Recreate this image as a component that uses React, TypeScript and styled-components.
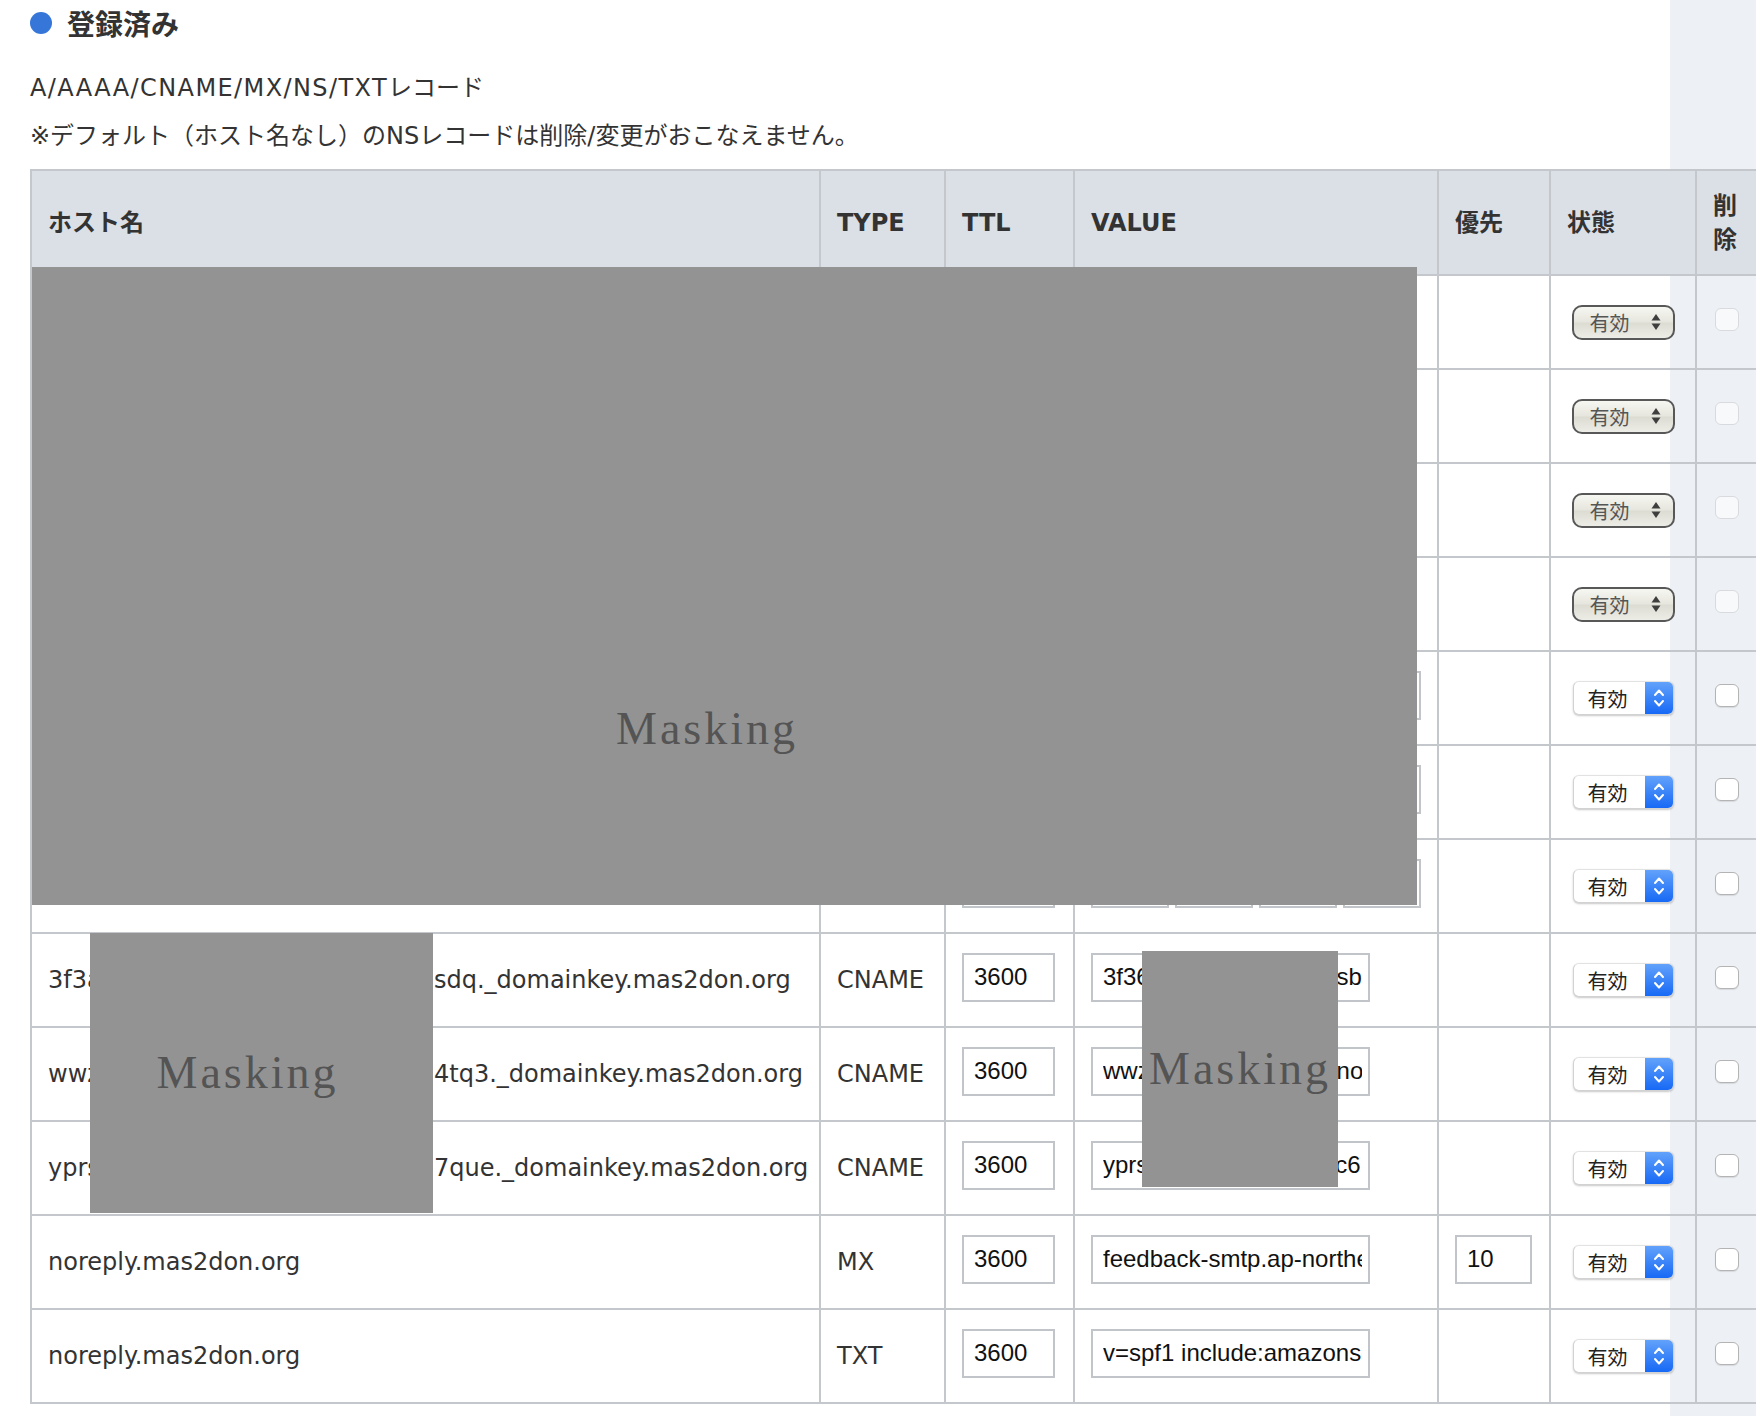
import React from 'react';
import styled, {createGlobalStyle} from 'styled-components';

const GlobalStyle = createGlobalStyle`
  html, body {
    margin: 0;
    padding: 0;
  }
  body {
    background: #edf0f4;
    color: #333;
    font-family: "DejaVu Sans", "Noto Sans CJK JP", sans-serif;
  }
`;

type DnsRecord = {
  host: string;
  hostMasked?: string;
  type: string;
  ttl: string;
  value?: string;
  octets?: string[];
  priority?: string;
  locked?: boolean;
};

const records: DnsRecord[] = [
  {host: 'mas2don.org', type: 'NS', ttl: '172800', value: 'ns-1088.awsdns-08.org.', locked: true},
  {host: 'mas2don.org', type: 'NS', ttl: '172800', value: 'ns-1783.awsdns-30.co.uk.', locked: true},
  {host: 'mas2don.org', type: 'NS', ttl: '172800', value: 'ns-325.awsdns-40.com.', locked: true},
  {host: 'mas2don.org', type: 'NS', ttl: '172800', value: 'ns-731.awsdns-27.net.', locked: true},
  {host: 'mas2don.org', type: 'A', ttl: '3600', octets: ['13', '230', '54', '112']},
  {host: 'www.mas2don.org', type: 'A', ttl: '3600', octets: ['13', '230', '54', '112']},
  {host: 'files.mas2don.org', type: 'A', ttl: '3600', octets: ['52', '68', '11', '207']},
  {
    hostMasked: '3f3a8e1d0b7e29d45kqw8',
    host: 'sdq._domainkey.mas2don.org',
    type: 'CNAME',
    ttl: '3600',
    value: '3f36a8e1d0b7e29d45sbq.dkim.amazonses.com',
  },
  {
    hostMasked: 'wwza4b8e1d2905e7dkl',
    host: '4tq3._domainkey.mas2don.org',
    type: 'CNAME',
    ttl: '3600',
    value: 'wwza4b8e1d2905e7dnoq.dkim.amazonses.com',
  },
  {
    hostMasked: 'yprs8e1d0a7b29d45xm',
    host: '7que._domainkey.mas2don.org',
    type: 'CNAME',
    ttl: '3600',
    value: 'yprs8e1d0a7b29d45dc6.dkim.amazonses.com',
  },
  {
    host: 'noreply.mas2don.org',
    type: 'MX',
    ttl: '3600',
    value: 'feedback-smtp.ap-northeast-1.amazonses.com',
    priority: '10',
  },
  {host: 'noreply.mas2don.org', type: 'TXT', ttl: '3600', value: 'v=spf1 include:amazonses.com ~all'},
];

const Page = styled.div`
  display: flex;
  min-height: 1416px;
  overflow: hidden;
`;

const Main = styled.main`
  position: relative;
  z-index: 1;
  flex: 0 0 1670px;
  min-width: 0;
  box-sizing: border-box;
  padding-left: 30px;
  background: #fff;
`;

const Side = styled.aside`
  flex: 1;
  min-width: 0;
  background: #edf0f4;
`;

const Heading = styled.h2`
  display: flex;
  align-items: center;
  gap: 15px;
  height: 46px;
  margin: 0;
  font-family: "Noto Sans CJK JP", sans-serif;
  font-size: 28px;
  font-weight: bold;
  color: #333;
`;

const Dot = styled.span`
  width: 22px;
  height: 22px;
  border-radius: 50%;
  background: #3576d8;
`;

const Notes = styled.div`
  margin-top: 18px;
  font-size: 24px;
  line-height: 48px;
  color: #333;
  white-space: nowrap;
`;

const Wide = styled.span`
  letter-spacing: 1.4px;
`;

const Table = styled.table`
  width: 1726px;
  margin-top: 9px;
  table-layout: fixed;
  border-collapse: collapse;
  font-size: 24px;
`;

const HeadCell = styled.th`
  height: 103px;
  padding: 0 16px;
  border: 2px solid #c4c7cb;
  background: #dbe0e7;
  text-align: left;
  vertical-align: middle;
  font-weight: bold;
  line-height: 34px;
  color: #333;
`;

const Cell = styled.td<{$center?: boolean}>`
  height: 92px;
  padding: 0 16px;
  border: 2px solid #c4c7cb;
  text-align: ${p => (p.$center ? 'center' : 'left')};
  vertical-align: middle;
  white-space: nowrap;
  overflow: hidden;
  color: #333;
`;

const HostPrefix = styled.span`
  display: inline-block;
  width: 386px;
  overflow: hidden;
  vertical-align: bottom;
`;

const Field = styled.input<{$w: number}>`
  display: block;
  box-sizing: border-box;
  width: ${p => p.$w}px;
  height: 49px;
  margin: 0 0 6px;
  padding: 0 6px 0 10px;
  border: 2px solid #c1c4c8;
  border-radius: 0;
  background: #fff;
  font-family: "Liberation Sans", Arial, sans-serif;
  font-size: 24px;
  color: #111;
  outline: none;
`;

const Octets = styled.div`
  display: flex;
  gap: 6px;
`;

const Select = styled.div<{$legacy?: boolean}>`
  display: inline-flex;
  align-items: center;
  justify-content: space-between;
  box-sizing: border-box;
  width: ${p => (p.$legacy ? 103 : 101)}px;
  height: ${p => (p.$legacy ? 35 : 34)}px;
  overflow: hidden;
  vertical-align: middle;
  font-family: "Noto Sans CJK JP", sans-serif;
  font-size: 20px;
  text-align: left;
  ${p =>
    p.$legacy
      ? `
    padding: 0 12px 0 16px;
    border: 2px solid #585858;
    border-radius: 10px;
    background: linear-gradient(#f7f7f2, #e6e6de 48%, #dcdcd3 52%, #ededE7);
    color: #555;
  `
      : `
    padding-left: 14px;
    border: 1px solid #d2d2d2;
    border-top-color: #e2e2e2;
    border-radius: 6px;
    background: #fff;
    box-shadow: 0 1px 2px rgba(0, 0, 0, 0.22);
    color: #222;
  `}
`;

const SelectCap = styled.span`
  display: flex;
  align-items: center;
  justify-content: center;
  align-self: stretch;
  width: 28px;
  background: linear-gradient(#62a2fb, #1769f5);
`;

const Check = styled.span<{$disabled?: boolean}>`
  display: inline-block;
  box-sizing: border-box;
  width: 24px;
  height: 23px;
  margin-bottom: 6px;
  vertical-align: middle;
  border-radius: 6px;
  border: 1.5px solid ${p => (p.$disabled ? '#d8dadd' : '#b4b4b4')};
  background: ${p => (p.$disabled ? '#f8f9fb' : '#fff')};
  box-shadow: ${p => (p.$disabled ? 'none' : '0 1px 1px rgba(0, 0, 0, 0.1)')};
`;

const Mask = styled.div<{$x: number; $y: number; $w: number; $h: number; $top?: number; $shift?: number}>`
  position: absolute;
  left: ${p => p.$x}px;
  top: ${p => p.$y}px;
  width: ${p => p.$w}px;
  height: ${p => p.$h}px;
  box-sizing: border-box;
  display: flex;
  justify-content: center;
  align-items: ${p => (p.$top ? 'flex-start' : 'center')};
  padding-top: ${p => p.$top ?? 0}px;
  padding-right: ${p => p.$shift ?? 0}px;
  background: #939393;
  font-family: "Liberation Serif", serif;
  font-size: 46px;
  line-height: 46px;
  letter-spacing: 3px;
  color: #545454;
`;

const LegacyArrows = () => (
  <svg width="10" height="18" viewBox="0 0 10 18">
    <path d="M5 1 L9.5 7.5 L0.5 7.5 Z" fill="#3e3e3e"/>
    <path d="M0.5 10.5 L9.5 10.5 L5 17 Z" fill="#3e3e3e"/>
  </svg>
);

const AquaArrows = () => (
  <svg width="14" height="22" viewBox="0 0 14 22" fill="none" stroke="#fff" strokeWidth="2" strokeLinecap="round" strokeLinejoin="round">
    <path d="M3 8 L7 3.5 L11 8"/>
    <path d="M3 14 L7 18.5 L11 14"/>
  </svg>
);

const StateSelect = ({legacy}: {legacy?: boolean}) => (
  <Select $legacy={legacy}>
    <span>有効</span>
    {legacy ? <LegacyArrows/> : <SelectCap><AquaArrows/></SelectCap>}
  </Select>
);

const App = () => {
  return (
    <Page>
      <GlobalStyle/>
      <Main>
        <Heading>
          <Dot/>
          登録済み
        </Heading>
        <Notes>
          <div><Wide>A/AAAA/CNAME/MX/NS/TXT</Wide>レコード</div>
          <div>※デフォルト（ホスト名なし）のNSレコードは削除/変更がおこなえません。</div>
        </Notes>
        <Table>
          <colgroup>
            <col style={{width: 789}}/>
            <col style={{width: 125}}/>
            <col style={{width: 129}}/>
            <col style={{width: 364}}/>
            <col style={{width: 112}}/>
            <col style={{width: 146}}/>
            <col style={{width: 61}}/>
          </colgroup>
          <thead>
            <tr>
              <HeadCell>ホスト名</HeadCell>
              <HeadCell>TYPE</HeadCell>
              <HeadCell>TTL</HeadCell>
              <HeadCell>VALUE</HeadCell>
              <HeadCell>優先</HeadCell>
              <HeadCell>状態</HeadCell>
              <HeadCell>削除</HeadCell>
            </tr>
          </thead>
          <tbody>
            {records.map((r, i) => (
              <tr key={i}>
                <Cell>
                  {r.hostMasked && <HostPrefix>{r.hostMasked}</HostPrefix>}
                  {r.host}
                </Cell>
                <Cell>{r.type}</Cell>
                <Cell>{r.locked ? r.ttl : <Field $w={93} defaultValue={r.ttl}/>}</Cell>
                <Cell>
                  {r.locked && r.value}
                  {r.octets && (
                    <Octets>
                      {r.octets.map((o, j) => <Field key={j} $w={78} defaultValue={o}/>)}
                    </Octets>
                  )}
                  {!r.locked && r.value && <Field $w={279} defaultValue={r.value}/>}
                </Cell>
                <Cell>{r.priority && <Field $w={77} defaultValue={r.priority}/>}</Cell>
                <Cell $center>
                  <StateSelect legacy={r.locked}/>
                </Cell>
                <Cell $center>
                  <Check $disabled={r.locked}/>
                </Cell>
              </tr>
            ))}
          </tbody>
        </Table>
        <Mask $x={32} $y={267} $w={1385} $h={638} $top={439} $shift={35}>Masking</Mask>
        <Mask $x={90} $y={933} $w={343} $h={280} $shift={28}>Masking</Mask>
        <Mask $x={1142} $y={951} $w={196} $h={236}>Masking</Mask>
      </Main>
      <Side/>
    </Page>
  );
};

export default App;
